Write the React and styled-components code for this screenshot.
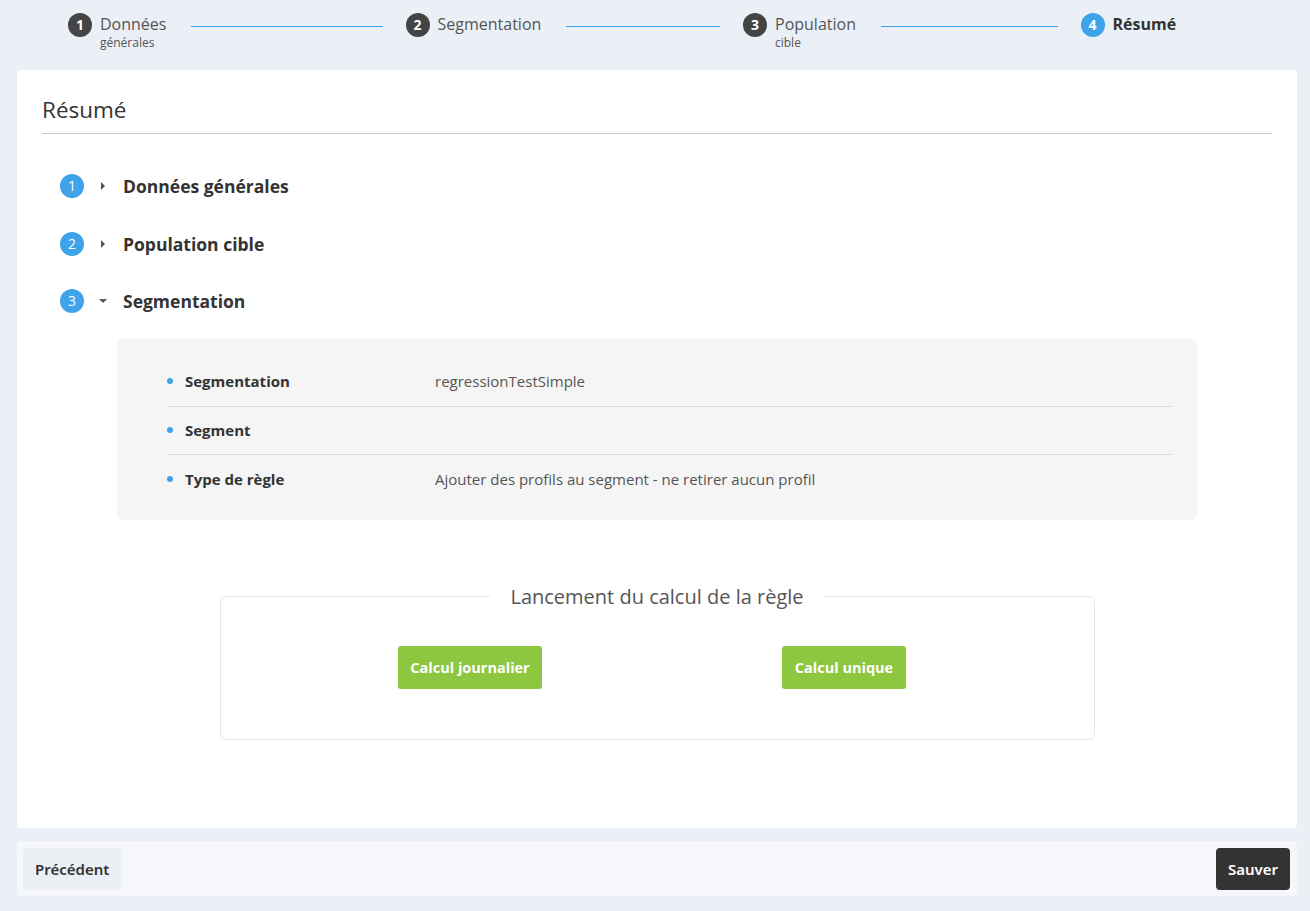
import React from 'react';
import styled, { createGlobalStyle } from 'styled-components';

const GlobalStyle = createGlobalStyle`
	html, body {
		margin: 0;
		padding: 0;
		background: #ebeff6;
		font-family: 'Open Sans', 'Liberation Sans', sans-serif;
		color: #333;
	}
	* {
		box-sizing: border-box;
	}
`;

const steps = [
	{ label: 'Données', sub: 'générales' },
	{ label: 'Segmentation' },
	{ label: 'Population', sub: 'cible' },
	{ label: 'Résumé', active: true },
];

const sections = [
	{ title: 'Données générales' },
	{ title: 'Population cible' },
	{ title: 'Segmentation', open: true },
];

const details = [
	{ label: 'Segmentation', value: 'regressionTestSimple' },
	{ label: 'Segment', value: '' },
	{ label: 'Type de règle', value: 'Ajouter des profils au segment - ne retirer aucun profil' },
];

function Caret({ open }) {
	return (
		<CaretBox>
			<svg width='10' height='10' viewBox='0 0 10 10'>
				{open ? (
					<path d='M1 3 L9 3 L5 7 Z' fill='#555' />
				) : (
					<path d='M3 1 L7 5 L3 9 Z' fill='#555' />
				)}
			</svg>
		</CaretBox>
	);
}

function App() {
	return (
		<Page>
			<GlobalStyle />
			<Stepper>
				{steps.map((step, i) => (
					<Step key={step.label}>
						<StepNumber $active={step.active}>{i + 1}</StepNumber>
						<StepText>
							<StepLabel $active={step.active}>{step.label}</StepLabel>
							{step.sub && <StepSub>{step.sub}</StepSub>}
						</StepText>
						{i < steps.length - 1 && <StepLine />}
					</Step>
				))}
			</Stepper>

			<Card>
				<Title>Résumé</Title>

				<SectionList>
					{sections.map((section, i) => (
						<Section key={section.title}>
							<SectionHeader>
								<SectionNumber>{i + 1}</SectionNumber>
								<Caret open={section.open} />
								<SectionTitle>{section.title}</SectionTitle>
							</SectionHeader>
							{section.open && (
								<DetailPanel>
									{details.map((row) => (
										<DetailRow key={row.label}>
											<Bullet />
											<DetailLabel>{row.label}</DetailLabel>
											<DetailValue>{row.value}</DetailValue>
										</DetailRow>
									))}
								</DetailPanel>
							)}
						</Section>
					))}
				</SectionList>

				<LaunchBox>
					<Legend>Lancement du calcul de la règle</Legend>
					<LaunchButtons>
						<GreenButton>Calcul journalier</GreenButton>
						<GreenButton>Calcul unique</GreenButton>
					</LaunchButtons>
				</LaunchBox>
			</Card>

			<Footer>
				<FooterButton>Précédent</FooterButton>
				<FooterButton $dark>Sauver</FooterButton>
			</Footer>
		</Page>
	);
}

export default App;

const Page = styled.div`
	width: 1310px;
	min-height: 911px;
	padding: 0 13px 15px 17px;
`;

const Stepper = styled.div`
	display: grid;
	grid-template-columns: 337.5px 337.5px 337.5px auto;
	height: 70px;
	padding: 13px 0 0 51px;
`;

const Step = styled.div`
	display: flex;
	align-items: flex-start;
`;

const StepNumber = styled.div`
	flex: none;
	width: 24px;
	height: 24px;
	border-radius: 50%;
	background: ${(p) => (p.$active ? '#3ea3e8' : '#444')};
	color: #fff;
	font-weight: 700;
	font-size: 14px;
	line-height: 24px;
	text-align: center;
	margin-right: 8px;
`;

const StepText = styled.div`
	display: flex;
	flex-direction: column;
`;

const StepLabel = styled.span`
	font-size: 16px;
	line-height: 22px;
	color: ${(p) => (p.$active ? '#333' : '#555')};
	font-weight: ${(p) => (p.$active ? 700 : 400)};
`;

const StepSub = styled.span`
	font-size: 12px;
	line-height: 16px;
	color: #555;
`;

const StepLine = styled.div`
	flex: 1;
	height: 1px;
	background: #3ea3e8;
	margin: 12.5px 23px 0 25px;
`;

const Card = styled.div`
	height: 758px;
	background: #fff;
	border-radius: 4px;
	padding: 24px 25px 0;
`;

const Title = styled.h1`
	margin: 0;
	font-size: 22.5px;
	font-weight: 400;
	line-height: 31px;
	color: #333;
	padding-bottom: 8px;
	border-bottom: 1px solid #ccc;
`;

const SectionList = styled.div`
	display: flex;
	flex-direction: column;
	gap: 23.5px;
	margin-top: 35px;
`;

const Section = styled.div`
	display: flex;
	flex-direction: column;
`;

const SectionHeader = styled.div`
	display: flex;
	align-items: center;
	height: 34px;
	padding-left: 18px;
`;

const SectionNumber = styled.div`
	width: 24px;
	height: 24px;
	border-radius: 50%;
	background: #3ea3e8;
	color: #fff;
	font-size: 14px;
	line-height: 24px;
	text-align: center;
`;

const CaretBox = styled.span`
	display: flex;
	width: 10px;
	margin: 0 15px 0 14px;
`;

const SectionTitle = styled.h2`
	margin: 0;
	font-size: 17.5px;
	font-weight: 700;
	color: #333;
`;

const DetailPanel = styled.div`
	margin: 21px 75px 0;
	background: #f5f5f5;
	border-radius: 6px;
	padding: 18px 25px 17px 50px;
`;

const DetailRow = styled.div`
	display: flex;
	align-items: center;
	height: 48.5px;
	font-size: 15px;
	& + & {
		border-top: 1px solid #dcdcdc;
	}
`;

const Bullet = styled.span`
	width: 6px;
	height: 6px;
	border-radius: 50%;
	background: #3ea3e8;
	margin: 0 12px 0 0;
	flex: none;
`;

const DetailLabel = styled.span`
	width: 250px;
	font-weight: 700;
	color: #333;
`;

const DetailValue = styled.span`
	color: #555;
`;

const LaunchBox = styled.fieldset`
	width: 875px;
	margin: 63px auto 0;
	padding: 0 0 50px;
	border: 1px solid #e5e5e5;
	border-radius: 6px;
`;

const Legend = styled.legend`
	margin: 0 auto;
	padding: 0 20px;
	font-size: 20px;
	line-height: 27px;
	color: #555;
`;

const LaunchButtons = styled.div`
	display: grid;
	grid-template-columns: 374px 374px;
	justify-content: center;
	justify-items: center;
	margin-top: 36px;
`;

const GreenButton = styled.button`
	height: 43px;
	padding: 0 12.5px;
	border: none;
	border-radius: 3px;
	background: #8dc63f;
	color: #fff;
	font-family: 'Open Sans', 'Liberation Sans', sans-serif;
	font-size: 14.5px;
	font-weight: 700;
`;

const Footer = styled.div`
	display: flex;
	justify-content: space-between;
	align-items: center;
	margin-top: 13px;
	height: 55px;
	padding: 0 7px 0 6px;
	background: #f5f7fa;
	border-radius: 4px;
`;

const FooterButton = styled.button`
	height: 42px;
	padding: 0 12px;
	border: none;
	border-radius: 4px;
	background: ${(p) => (p.$dark ? '#333' : '#eceff3')};
	color: ${(p) => (p.$dark ? '#fff' : '#333')};
	font-family: 'Noto Sans', 'Liberation Sans', sans-serif;
	font-size: 15px;
	font-weight: 600;
`;
